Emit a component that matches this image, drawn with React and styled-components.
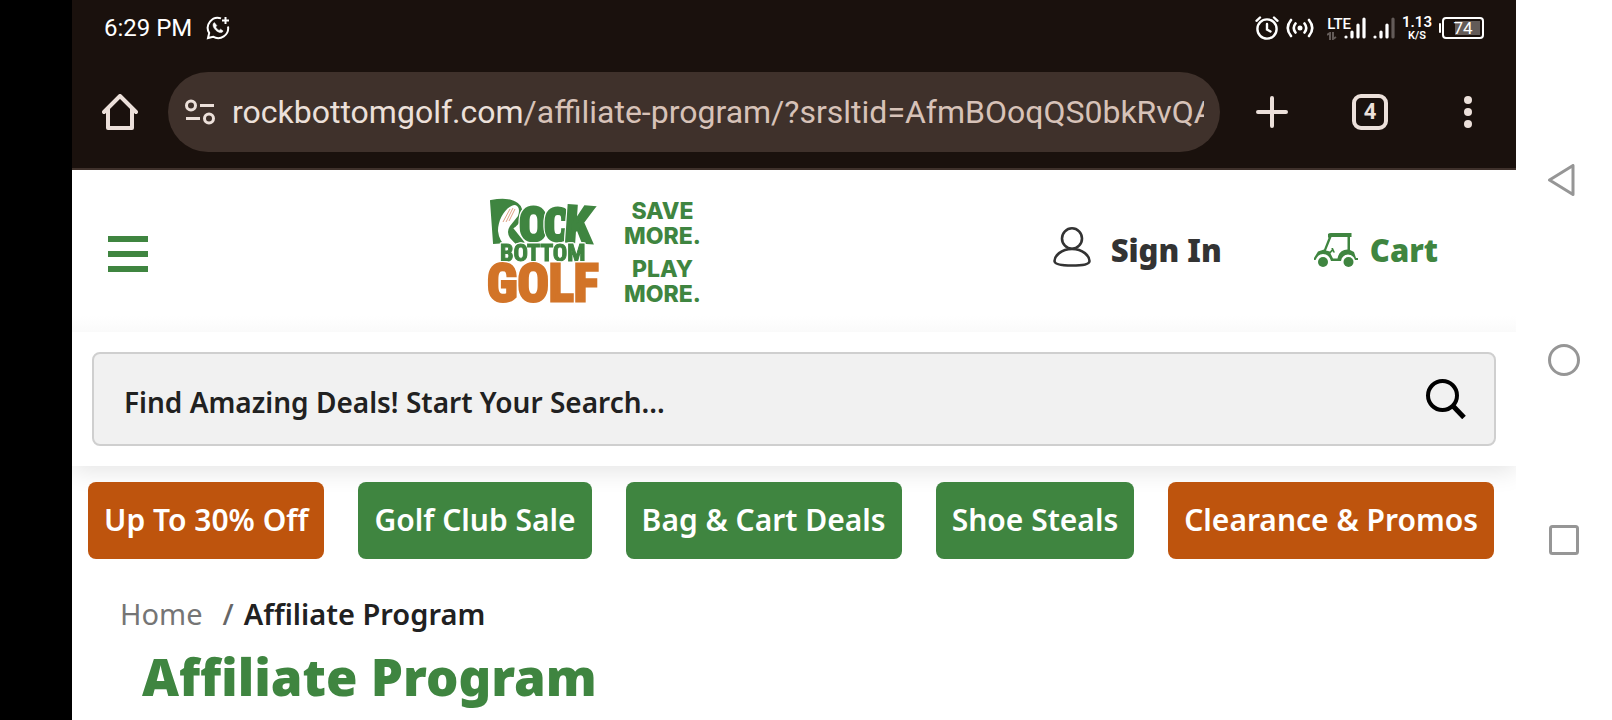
import React from 'react';
import styled, { createGlobalStyle } from 'styled-components';

const green = '#3f8540';
const orange = '#be540d';
const ink = '#212121';
const cream = '#ece0da';

const GlobalStyle = createGlobalStyle`
  *, *::before, *::after { box-sizing: border-box; }
  body { margin: 0; background: #fff; font-family: 'Noto Sans', 'Open Sans', sans-serif; color: ${ink}; }
  button { border: 0; padding: 0; background: none; color: inherit; font: inherit; cursor: pointer; }
  a { color: inherit; text-decoration: none; }
  svg { display: block; flex: none; }
`;

const Device = styled.div`
  display: grid;
  grid-template-columns: 72px minmax(0, 1fr) 96px;
  min-height: 100vh;
`;
const Notch = styled.div`background: #000;`;
const Screen = styled.div`
  display: flex;
  flex-direction: column;
  overflow: hidden;
  background: #fff;
`;

const StatusBar = styled.div`
  display: flex;
  align-items: center;
  justify-content: space-between;
  height: 56px;
  padding: 0 32px;
  background: #1a110d;
  color: #fff;
  font-family: Roboto, sans-serif;
`;
const StatusGroup = styled.div`
  display: flex;
  align-items: center;
  gap: ${(p) => p.$gap}px;
`;
const Time = styled.span`font-size: 24px; line-height: 28px;`;
const Network = styled.div`
  display: flex;
  align-items: flex-end;
  height: 24px;
  margin-left: 6px;
`;
const NetworkType = styled.div`
  display: flex;
  flex-direction: column;
  align-items: flex-start;
  gap: 1px;
  margin-right: -7px;
  font-size: 15px;
  line-height: 14px;
  font-weight: 500;
`;
const Speed = styled.div`
  display: flex;
  flex-direction: column;
  align-items: center;
  font-size: 15px;
  line-height: 15px;
  font-weight: 600;
`;
const SpeedUnit = styled.span`font-size: 11px; line-height: 11px;`;
const Battery = styled.div`
  display: flex;
  align-items: center;
  gap: 1px;
  &::before { content: ''; width: 2px; height: 10px; border-radius: 1px; background: #fff; }
`;
const BatteryCell = styled.div`
  width: 42px;
  height: 22px;
  padding: 1px;
  border: 2px solid #fff;
  border-radius: 4px;
  background: linear-gradient(#635b58, #635b58) right 2px center / 25px 14px no-repeat;
  font-size: 17px;
  line-height: 17px;
  text-align: center;
`;

const Toolbar = styled.div`
  display: flex;
  align-items: center;
  height: 114px;
  padding: 0 24px;
  border-bottom: 2px solid #3f312b;
  background: #1a110d;
  color: ${cream};
`;
const ToolButton = styled.button`
  display: grid;
  place-items: center;
  width: 48px;
  height: 48px;
`;
const Actions = styled.div`display: flex; gap: 50px; margin-left: 28px;`;
const Omnibox = styled.div`
  display: flex;
  flex: 1;
  align-items: center;
  gap: 16px;
  min-width: 0;
  height: 80px;
  margin-left: 24px;
  padding: 0 16px;
  border-radius: 40px;
  background: #3f312b;
`;
const Url = styled.div`
  flex: 1;
  overflow: hidden;
  white-space: nowrap;
  color: #d7c2b8;
  font: 32px/40px Roboto, sans-serif;
`;
const Host = styled.span`color: ${cream};`;
const TabCount = styled.span`
  display: grid;
  place-items: center;
  width: 36px;
  height: 36px;
  border: 4px solid ${cream};
  border-radius: 9px;
  font: 700 22px/24px Roboto, sans-serif;
`;

const SiteHeader = styled.header`
  display: flex;
  align-items: center;
  height: 162px;
  padding: 0 78px 0 36px;
  background: linear-gradient(to top, #fafafa, #fff 16px);
`;
const MenuButton = styled.button`
  display: flex;
  flex-direction: column;
  gap: 9px;
  width: 40px;
  margin-top: 6px;
`;
const MenuBar = styled.span`width: 100%; height: 6px; background: ${green};`;
const Brand = styled.a`
  display: flex;
  align-items: center;
  gap: 18px;
  margin-left: 25%;
`;
const Tagline = styled.div`
  display: flex;
  flex-direction: column;
  gap: 8px;
  padding-top: 4px;
  color: ${green};
  font: 800 23px/25px Inter, sans-serif;
  text-align: center;
`;
const TaglinePair = styled.span`width: 78px;`;
const Account = styled.nav`
  display: flex;
  align-items: center;
  gap: 92px;
  margin-left: auto;
  padding-bottom: 2px;
`;
const AccountLink = styled.a`
  display: flex;
  align-items: center;
  gap: ${(p) => p.$gap}px;
  color: ${(p) => p.$color};
  font-size: 31px;
  line-height: 40px;
  font-weight: 900;
`;

const SearchSection = styled.form`
  position: relative;
  padding: 20px;
  background: #fff;
  box-shadow: 0 6px 22px rgba(0, 0, 0, 0.1);
  clip-path: inset(0 0 -32px 0);
`;
const SearchBox = styled.div`
  display: flex;
  align-items: center;
  height: 94px;
  padding: 0 28px 0 30px;
  border: 2px solid #cfcfcf;
  border-radius: 8px;
  background: #f1f1f1;
`;
const SearchInput = styled.input`
  flex: 1;
  min-width: 0;
  height: 90px;
  padding: 5px 0 0;
  border: 0;
  outline: 0;
  background: none;
  color: ${ink};
  font: 600 28px/40px 'Noto Sans', sans-serif;
  &::placeholder { color: ${ink}; opacity: 1; }
`;

const Deals = styled.nav`
  position: relative;
  display: flex;
  gap: 34px;
  padding: 16px 16px 0;
`;
const Deal = styled.a`
  padding: 15px 16px 17px;
  border-radius: 8px;
  background: ${(p) => (p.$hot ? orange : green)};
  color: #fff;
  font-size: 30px;
  line-height: 45px;
  font-weight: 600;
  white-space: nowrap;
`;

const Main = styled.main`padding: 35px 48px 0;`;
const Breadcrumb = styled.nav`
  display: flex;
  font-size: 29px;
  line-height: 40px;
`;
const Crumb = styled.a`color: #757575;`;
const Separator = styled.span`margin: 0 10px 0 20px; color: #666; font-weight: 500;`;
const CurrentCrumb = styled.span`font-weight: 600;`;
const Title = styled.h1`
  margin: 14px 0 0;
  padding-left: 22px;
  color: ${green};
  font-size: 51px;
  line-height: 56px;
  font-weight: 900;
`;

const SystemNav = styled.nav`
  display: flex;
  flex-direction: column;
  align-items: center;
  justify-content: space-around;
  padding: 12.5vh 0;
  background: #fff;
  color: #969696;
`;

const ChatIcon = () => (
  <svg width="24" height="24" viewBox="0 0 24 24" fill="none" stroke="#fff" strokeWidth="2" aria-hidden="true">
    <path d="M15 2.4A10 10 0 0 0 3.2 17L2 22l5-1.3A10 10 0 0 0 22 10.5" />
    <path d="M19.5 1v7M16 4.5h7" />
    <path d="M8.3 6.5c-2.6 2-.7 5.800 1.800 8 2.800 2.400 6 3 7 .4l-2.500-1.700-1.500 1.200c-1.600-.7-2.700-1.900-3.400-3.300l1.100-1.500z" fill="#fff" strokeWidth=".5" />
  </svg>
);
const AlarmIcon = () => (
  <svg width="24" height="24" viewBox="0 0 24 24" fill="none" stroke="#fff" strokeWidth="2.400" strokeLinecap="round" aria-hidden="true">
    <circle cx="12" cy="13" r="9.600" />
    <path d="M12 8v5.500l3.500 2M1.500 4.800 5 1.500M22.500 4.800 19 1.500" />
  </svg>
);
const HotspotIcon = () => (
  <svg width="28" height="24" viewBox="0 0 28 24" fill="none" stroke="#fff" strokeWidth="2.600" strokeLinecap="round" aria-hidden="true">
    <circle cx="14" cy="12" r="1.200" fill="#fff" />
    <path d="M9.500 7.500q-3.500 4.500 0 9M18.500 7.500q3.500 4.500 0 9M5 4q-6.500 8 0 16M23 4q6.500 8 0 16" />
  </svg>
);
const BarsIcon = ({ weak }) => (
  <svg width="22" height="24" viewBox="0 0 22 24" stroke="#fff" strokeWidth="3.200" strokeLinecap="round" aria-hidden="true">
    <path d={weak ? 'M2 21v0M8 16v5M14 9v12' : 'M2 21v0M8 16v5M14 9v12M20 3v18'} />
    {weak && <path d="M20 3v18" stroke="#635b58" />}
  </svg>
);
const DataArrows = () => (
  <svg width="10" height="8" viewBox="0 0 10 8" fill="none" stroke="#635b58" strokeWidth="2" aria-hidden="true">
    <path d="M0 3 3 1v7M6 0v7l3-2" />
  </svg>
);
const HomeIcon = () => (
  <svg width="36" height="36" viewBox="0 0 36 36" fill="none" stroke="currentColor" strokeWidth="4" strokeLinejoin="round" strokeLinecap="round" aria-hidden="true">
    <path d="M2 18 18 2l16 16M6 15v19h24V15" />
  </svg>
);
const SiteInfoIcon = () => (
  <svg width="32" height="28" viewBox="0 0 32 28" fill="none" stroke="currentColor" strokeWidth="3" aria-hidden="true">
    <circle cx="7" cy="7.500" r="4.500" />
    <circle cx="25" cy="20.500" r="4.500" />
    <path d="M16 7.500h14M2 20.500h14" />
  </svg>
);
const PlusIcon = () => (
  <svg width="32" height="32" viewBox="0 0 32 32" stroke="currentColor" strokeWidth="4" strokeLinecap="round" aria-hidden="true">
    <path d="M16 2v28M2 16h28" />
  </svg>
);
const MoreIcon = () => (
  <svg width="8" height="32" viewBox="0 0 8 32" fill="currentColor" aria-hidden="true">
    <circle cx="4" cy="4" r="4" /><circle cx="4" cy="16" r="4" /><circle cx="4" cy="28" r="4" />
  </svg>
);

const LogoArt = styled.svg`
  font-family: 'Liberation Sans Narrow', 'Roboto Condensed', 'Liberation Sans', sans-serif;
  font-weight: 700;
  overflow: visible;
`;
const LogoWord = styled.g`
  fill: ${(p) => p.$color};
  stroke: ${(p) => p.$color};
  stroke-width: ${(p) => p.$weight}px;
  filter: drop-shadow(1px 0 0 #fff) drop-shadow(-1px 0 0 #fff) drop-shadow(0 -1px 0 #fff);
`;
const Logo = () => (
  <LogoArt width="125" height="112" viewBox="0 0 125 112" role="img" aria-label="Rock Bottom Golf">
    <LogoWord $color={green} $weight={2}>
      <path d="M10 6Q25 3 33 7Q42 11 40 21Q38 29 31 33L42 47L29 50L24 43L28 47L13 48Z" />
    </LogoWord>
    <path d="M34 10C25 11 17 24 17 36Q18 46 26 53L45 57Q35 50 29 43Q25 37 29 31L37 21Q40 12 34 10Z" fill="#fff" />
    <path d="M22 27l7-13M25 27l7-14M28 26l6-12" stroke="#dda184" fill="none" />
    <LogoWord $color={green} $weight={3}><text x="38" y="46" fontSize="48">O</text></LogoWord>
    <LogoWord $color={green} $weight={3}><text x="63" y="46" fontSize="47">C</text></LogoWord>
    <LogoWord $color={green} $weight={3}><text x="84" y="47" fontSize="50" transform="rotate(4 98 30)">K</text></LogoWord>
    <LogoWord $color={green} $weight={1}><text x="19" y="66" fontSize="24">BOTTOM</text></LogoWord>
    <LogoWord $color="#d27428" $weight={3}><text x="6" y="106" fontSize="52">GOLF</text></LogoWord>
  </LogoArt>
);

const PersonIcon = () => (
  <svg width="38" height="46" viewBox="0 0 38 46" fill="none" stroke="#333" strokeWidth="2.600" aria-hidden="true">
    <ellipse cx="19" cy="11.500" rx="10" ry="10.200" />
    <path d="M19 22C8 22 1.500 29 1.500 34q0 4.500 17.500 4.500T36.500 34C36.500 29 30 22 19 22Z" />
  </svg>
);
const GolfCartIcon = () => (
  <svg width="44" height="34" viewBox="0 0 44 34" fill={green} aria-hidden="true">
    <path d="M14 1Q15 0 17 0H37.500V4H36V17L40 19L42 25H44V27H41Q39 21.500 34 21.500Q28 22 27 28H17Q15 21 9 21Q4 21 1.500 27H0V25L4 18.500L10 16.500L14.500 5L14 4ZM17.500 4L12 17.500L16 18.500L18 16L17 15H19L21 19.500H19L18.500 18L16.500 20.500L19 25.500H23.500Q25 17 33.500 16.500V4Z" />
    <circle cx="9" cy="29" r="5" /><circle cx="34.500" cy="29" r="5" />
  </svg>
);
const SearchIcon = () => (
  <svg width="40" height="40" viewBox="0 0 40 40" fill="none" stroke="#000" strokeWidth="4" aria-hidden="true">
    <circle cx="16.500" cy="16.500" r="14.500" />
    <path d="M27 27 38 38.500" strokeWidth="5" />
  </svg>
);

const deals = [
  { label: 'Up To 30% Off', hot: true },
  { label: 'Golf Club Sale' },
  { label: 'Bag & Cart Deals' },
  { label: 'Shoe Steals' },
  { label: 'Clearance & Promos', hot: true },
];

export default function App() {
  return (
    <>
      <GlobalStyle />
      <Device>
        <Notch />
        <Screen>
          <StatusBar>
            <StatusGroup $gap={14}>
              <Time>6:29 PM</Time>
              <ChatIcon />
            </StatusGroup>
            <StatusGroup $gap={7}>
              <AlarmIcon />
              <HotspotIcon />
              <Network>
                <NetworkType>LTE<DataArrows /></NetworkType>
                <BarsIcon />
              </Network>
              <BarsIcon weak />
              <Speed>1.13<SpeedUnit>K/S</SpeedUnit></Speed>
              <Battery><BatteryCell>74</BatteryCell></Battery>
            </StatusGroup>
          </StatusBar>

          <Toolbar>
            <ToolButton aria-label="Home"><HomeIcon /></ToolButton>
            <Omnibox>
              <SiteInfoIcon />
              <Url><Host>rockbottomgolf.com</Host>/affiliate-program/?srsltid=AfmBOoqQS0bkRvQA</Url>
            </Omnibox>
            <Actions>
              <ToolButton aria-label="New tab"><PlusIcon /></ToolButton>
              <ToolButton aria-label="Tabs"><TabCount>4</TabCount></ToolButton>
              <ToolButton aria-label="More"><MoreIcon /></ToolButton>
            </Actions>
          </Toolbar>

          <SiteHeader>
            <MenuButton aria-label="Menu"><MenuBar /><MenuBar /><MenuBar /></MenuButton>
            <Brand href="#">
              <Logo />
              <Tagline>
                <TaglinePair>SAVE MORE.</TaglinePair>
                <TaglinePair>PLAY MORE.</TaglinePair>
              </Tagline>
            </Brand>
            <Account>
              <AccountLink href="#" $gap={20} $color="#333"><PersonIcon />Sign In</AccountLink>
              <AccountLink href="#" $gap={12} $color={green}><GolfCartIcon />Cart</AccountLink>
            </Account>
          </SiteHeader>

          <SearchSection role="search">
            <SearchBox>
              <SearchInput aria-label="Search" placeholder="Find Amazing Deals! Start Your Search..." />
              <button type="button" aria-label="Submit search"><SearchIcon /></button>
            </SearchBox>
          </SearchSection>

          <Deals>
            {deals.map((d) => (
              <Deal key={d.label} href="#" $hot={d.hot}>{d.label}</Deal>
            ))}
          </Deals>

          <Main>
            <Breadcrumb aria-label="Breadcrumb">
              <Crumb href="#">Home</Crumb>
              <Separator>/</Separator>
              <CurrentCrumb>Affiliate Program</CurrentCrumb>
            </Breadcrumb>
            <Title>Affiliate Program</Title>
          </Main>
        </Screen>

        <SystemNav>
          <button aria-label="Back">
            <svg width="32" height="32" viewBox="0 0 32 32" fill="none" stroke="currentColor" strokeWidth="3" strokeLinejoin="round">
              <path d="M1.500 16 25 1.500v29Z" />
            </svg>
          </button>
          <button aria-label="Home screen">
            <svg width="32" height="32" viewBox="0 0 32 32" fill="none" stroke="currentColor" strokeWidth="3">
              <circle cx="16" cy="16" r="14.500" />
            </svg>
          </button>
          <button aria-label="Recent apps">
            <svg width="32" height="32" viewBox="0 0 32 32" fill="none" stroke="currentColor" strokeWidth="3">
              <rect x="2.500" y="2.500" width="27" height="27" rx="2" />
            </svg>
          </button>
        </SystemNav>
      </Device>
    </>
  );
}
